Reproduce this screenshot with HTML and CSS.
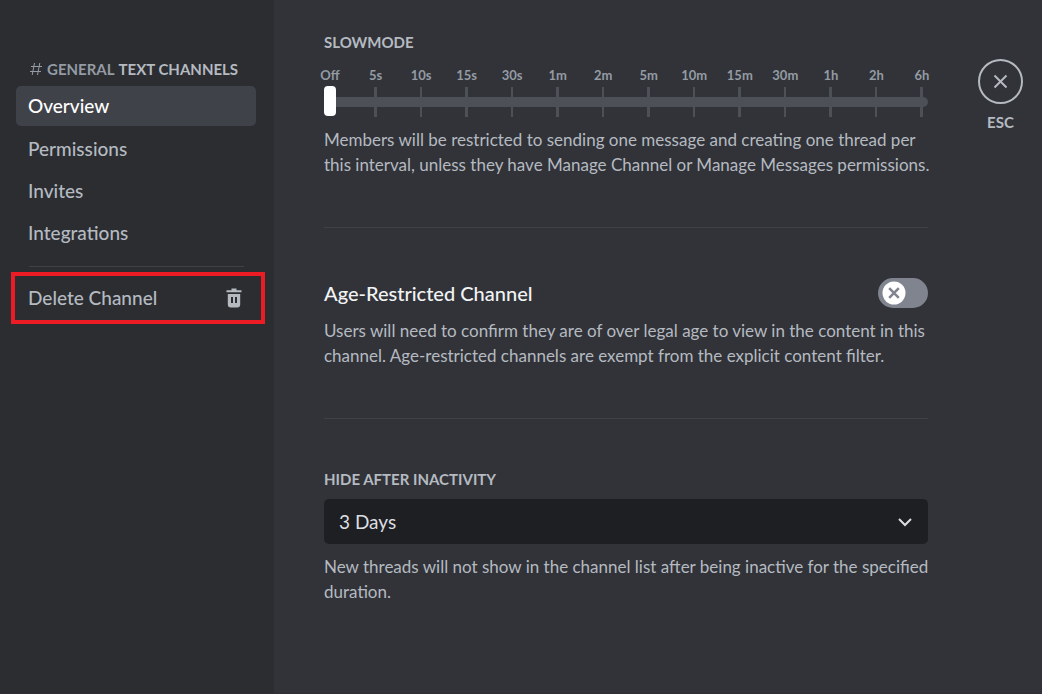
FILE: index.html
```html
<!DOCTYPE html>
<html lang="en">
<head>
    <meta charset="UTF-8">
    <meta name="viewport" content="width=device-width, initial-scale=1.0">
    <title>Channel Settings</title>
    <link rel="stylesheet" href="styles.css">
</head>
<body>
    <nav class="sidebar">
        <h2 class="sidebar-title">
            <svg class="hash" width="14" height="14" viewBox="0 0 14 14"><path d="M5.5 1 L3.2 13 M10.8 1 L8.5 13 M2 4.5 H13 M1 9.5 H12"/></svg>
            <span class="channel-name">General</span>
            <span>Text Channels</span>
        </h2>
        <a href="#overview" class="item selected">Overview</a>
        <a href="#permissions" class="item">Permissions</a>
        <a href="#invites" class="item">Invites</a>
        <a href="#integrations" class="item">Integrations</a>
        <hr class="sidebar-line">
        <div class="highlight">
            <button type="button" class="item delete">
                Delete Channel
                <svg class="trash" width="16" height="20" viewBox="0 0 16 20">
                    <path d="M5.5 0.5h5v1.7h5v2H0.5v-2h5z"/>
                    <path fill-rule="evenodd" d="M1.8 6h12.4v10.5a3 3 0 0 1-3 3H4.8a3 3 0 0 1-3-3zM5 9v6h2V9zM9 9v6h2V9z"/>
                </svg>
            </button>
        </div>
    </nav>

    <main class="content">
        <section>
            <label class="title" for="slowmode">Slowmode</label>
            <div class="slider">
                <ol class="marks">
                    <li><span>Off</span></li>
                    <li><span>5s</span></li>
                    <li><span>10s</span></li>
                    <li><span>15s</span></li>
                    <li><span>30s</span></li>
                    <li><span>1m</span></li>
                    <li><span>2m</span></li>
                    <li><span>5m</span></li>
                    <li><span>10m</span></li>
                    <li><span>15m</span></li>
                    <li><span>30m</span></li>
                    <li><span>1h</span></li>
                    <li><span>2h</span></li>
                    <li><span>6h</span></li>
                </ol>
                <input type="range" id="slowmode" min="0" max="13" value="0">
            </div>
            <p class="note">Members will be restricted to sending one message and creating one thread per this interval, unless they have Manage Channel or Manage Messages permissions.</p>
        </section>
        <hr class="line">
        <section>
            <div class="switch-row">
                <label class="switch-label" for="age">Age-Restricted Channel</label>
                <div class="switch">
                    <input type="checkbox" id="age">
                    <svg class="knob" width="24" height="24" viewBox="0 0 24 24">
                        <circle cx="12" cy="12" r="11.5"/>
                        <path d="M7.2 7.2 L16.8 16.8 M16.8 7.2 L7.2 16.8"/>
                    </svg>
                </div>
            </div>
            <p class="note">Users will need to confirm they are of over legal age to view in the content in this channel. Age-restricted channels are exempt from the explicit content filter.</p>
        </section>
        <hr class="line">
        <section>
            <label class="title" for="inactivity">Hide After Inactivity</label>
            <div class="select-box">
                <select id="inactivity">
                    <option>1 Hour</option>
                    <option>24 Hours</option>
                    <option selected>3 Days</option>
                    <option>1 Week</option>
                </select>
                <svg class="chevron" width="16" height="10" viewBox="0 0 16 10"><path d="M2 2 L8 8 L14 2"/></svg>
            </div>
            <p class="note">New threads will not show in the channel list after being inactive for the specified duration.</p>
        </section>
    </main>

    <aside class="tools">
        <button type="button" class="close">
            <svg width="45" height="45" viewBox="0 0 45 45">
                <circle cx="22.5" cy="22.5" r="21.5"/>
                <path d="M16.5 16.5 L28.5 28.5 M28.5 16.5 L16.5 28.5"/>
            </svg>
            <span>ESC</span>
        </button>
    </aside>
</body>
</html>
```
FILE: styles.css
```css
* {
    box-sizing: border-box;
}
body {
    margin: 0;
    min-height: 100vh;
    display: flex;
    background: #313338;
    border-bottom: 1px solid #352d36;
    color: #b5bac1;
    font-family: Lato, "Noto Sans", sans-serif;
    font-size: 17px;
}
button {
    padding: 0;
    border: none;
    background: none;
    color: inherit;
    font: inherit;
    cursor: pointer;
}
hr {
    margin: 0;
    border: none;
    height: 1px;
    background: #3f4147;
}

/* sidebar */
.sidebar {
    flex: 0 0 274px;
    padding: 58px 18px 0 16px;
    background: #2b2d31;
}
.sidebar-title {
    display: flex;
    align-items: center;
    gap: 4px;
    margin: 0 0 6px 13px;
    font-size: 15px;
    line-height: 22px;
    font-weight: bold;
    text-transform: uppercase;
    white-space: nowrap;
}
.channel-name {
    color: #949ba4;
}
.hash {
    fill: none;
    stroke: #949ba4;
    stroke-width: 1;
}
.item {
    display: block;
    margin-bottom: 2px;
    padding: 0 14px 0 12px;
    border-radius: 5px;
    font-size: 19px;
    line-height: 40px;
    font-weight: 500;
    color: #b5bac1;
    text-decoration: none;
}
.selected {
    margin-bottom: 3px;
    background: #404249;
    color: #fff;
}
.sidebar-line {
    margin: 13px 12px 5px 13px;
}
.highlight {
    margin: 0 -9px 0 -5px;
    padding: 2px 5px 2px 1px;
    border: 4px solid #ed1c24;
}
.delete {
    display: flex;
    align-items: center;
    justify-content: space-between;
    width: 100%;
    margin: 0;
}
.trash {
    fill: #b5bac1;
}

/* settings */
.content {
    flex: 1;
    padding: 32px 0 0 50px;
}
.title {
    display: block;
    font-size: 15px;
    line-height: 20px;
    font-weight: bold;
    text-transform: uppercase;
}
.slider {
    display: grid;
    margin: 13px 0 10px;
}
.marks, #slowmode {
    grid-area: 1 / 1;
}
.marks {
    display: flex;
    justify-content: space-between;
    margin: 0;
    padding: 0 6px;
    list-style: none;
    font-size: 13px;
    line-height: 20px;
    font-weight: bold;
    color: #949ba4;
}
.marks li {
    width: 0;
    display: flex;
    flex-direction: column;
    align-items: center;
}
.marks li::after {
    content: "";
    width: 2px;
    height: 30px;
    margin-top: 2px;
    background: #4e5058;
}
.marks li:nth-child(even)::after {
    width: 3px;
}
.marks li:first-child::after {
    visibility: hidden;
}
#slowmode {
    appearance: none;
    align-self: end;
    width: 100%;
    height: 30px;
    margin: 0;
    background: none;
}
#slowmode::-webkit-slider-runnable-track {
    height: 10px;
    border-radius: 5px;
    background: #4e5058;
}
#slowmode::-webkit-slider-thumb {
    appearance: none;
    width: 12px;
    height: 30px;
    margin-top: -11px;
    border-radius: 4px;
    background: #fff;
}
.note {
    margin: 0 -5px 0 0;
    line-height: 25px;
}
.line {
    margin: 50px 0;
}
.switch-row {
    display: flex;
    align-items: center;
    justify-content: space-between;
    margin-bottom: 10px;
}
.switch-label {
    font-size: 20px;
    font-weight: 500;
    color: #f2f3f5;
}
.switch {
    position: relative;
    height: 30px;
}
.switch input {
    appearance: none;
    width: 50px;
    height: 30px;
    margin: 0;
    border-radius: 15px;
    background: #80848e;
    cursor: pointer;
}
.knob {
    position: absolute;
    top: 3px;
    left: 4px;
    pointer-events: none;
    fill: #fff;
    stroke: #80848e;
    stroke-width: 2.5;
}
.knob circle {
    stroke: none;
}
.select-box {
    position: relative;
    margin: 10px 0;
}
.select-box select {
    appearance: none;
    display: block;
    width: 100%;
    height: 45px;
    padding: 0 15px;
    border: none;
    border-radius: 5px;
    background: #1e1f22;
    color: #dbdee1;
    font: inherit;
    font-size: 19px;
}
.chevron {
    position: absolute;
    top: 18px;
    right: 15px;
    pointer-events: none;
    fill: none;
    stroke: #dbdee1;
    stroke-width: 2;
}

/* close button */
.tools {
    flex: 0 0 114px;
    padding: 59px 19px 0 50px;
}
.close {
    display: block;
    width: 45px;
    font-size: 15px;
    line-height: 20px;
    font-weight: bold;
}
.close svg {
    display: block;
    margin-bottom: 8px;
    fill: none;
    stroke: #b5bac1;
    stroke-width: 2;
}
```
